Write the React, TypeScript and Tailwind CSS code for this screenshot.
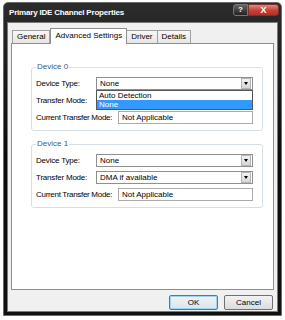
import React from "react";

const font = { fontFamily: "'Liberation Sans', Arial, sans-serif" };

function Select({ value, open }: { value: string; open?: boolean }) {
  return (
    <div className="relative w-[157px] h-[13px] border border-[#8f8f8f] bg-white flex items-center">
      <span className="pl-[3px] flex-1 text-[8px] text-black leading-none whitespace-nowrap">{value}</span>
      <div className="w-[10px] h-[11px] mr-px bg-gradient-to-b from-[#f2f2f2] to-[#d6d6d6] border border-[#b5b5b5] flex items-center justify-center">
        <div className="w-0 h-0 border-l-[2.5px] border-r-[2.5px] border-t-[3px] border-l-transparent border-r-transparent border-t-black" />
      </div>
      {open && (
        <div className="absolute left-[-1px] top-[12px] w-[157px] bg-white border border-[#555] z-10 flex flex-col text-[8px] leading-none">
          <div className="h-[9px] pl-[2px] flex items-center text-black">Auto Detection</div>
          <div className="h-[9px] pl-[2px] flex items-center bg-[#3399ff] text-white">None</div>
        </div>
      )}
    </div>
  );
}

function Group({ title, open, mode }: { title: string; open?: boolean; mode: string }) {
  return (
    <div className="relative ml-[19px] w-[232px] border border-[#d5dfe5] rounded-[3px] pt-[9px] pb-[6px] px-[4px] flex flex-col gap-[4px]">
      <span className="absolute left-[4px] top-[-5px] bg-white px-px text-[8px] leading-none text-[#3a5a8c]">{title}</span>
      <div className="flex items-center">
        <span className="w-[60px] text-[8px] text-black whitespace-nowrap tracking-[-0.2px]">Device Type:</span>
        <Select value="None" open={open} />
      </div>
      <div className="flex items-center">
        <span className="w-[60px] text-[8px] text-black whitespace-nowrap tracking-[-0.2px]">Transfer Mode:</span>
        <Select value={mode} />
      </div>
      <div className="flex items-center">
        <span className="w-[82px] text-[8px] text-black whitespace-nowrap tracking-[-0.3px]">Current Transfer Mode:</span>
        <div className="w-[135px] h-[13px] border border-[#ababab] bg-white flex items-center pl-[3px] text-[8px] leading-none whitespace-nowrap">
          Not Applicable
        </div>
      </div>
    </div>
  );
}

export default function App() {
  return (
    <div className="w-[285px] h-[320px] bg-white pt-[2px] px-[3px]" style={font}>
      <div className="h-[314px] w-[279px] bg-gradient-to-b from-[#2c2c2c] via-[#0a0a0a] to-[#111] rounded-t-[5px] border border-[#6a6a6a] flex flex-col px-[3px] pb-[3px]">
        <div className="h-[19px] flex items-start justify-between">
          <span className="mt-[6px] ml-[2px] text-[8px] font-bold text-white leading-none tracking-[-0.2px] whitespace-nowrap">Primary IDE Channel Properties</span>
          <div className="flex mt-[1px] mr-[-1px]">
            <div className="w-[15px] h-[12px] rounded-l-[3px] border border-[#777] bg-gradient-to-b from-[#666] to-[#222] flex items-center justify-center text-[8px] font-bold text-white leading-none">?</div>
            <div className="w-[31px] h-[12px] rounded-r-[3px] border border-[#7a3030] bg-gradient-to-b from-[#e08a80] via-[#c8443a] to-[#b33028] flex items-center justify-center text-[9px] font-bold text-white leading-none">X</div>
          </div>
        </div>
        <div className="flex-1 bg-[#f0f0f0] border border-[#7a7a7a] flex flex-col px-[3px]">
          <div className="flex items-end h-[20px] pl-px">
            <div className="h-[13px] px-[4px] border border-b-0 border-[#a0a0a0] bg-gradient-to-b from-[#f7f7f7] to-[#e6e6e6] text-[8px] leading-[12px]">General</div>
            <div className="h-[16px] px-[4px] border border-b-0 border-[#8d8d8d] bg-white text-[8px] leading-[13px] relative top-px z-10">Advanced Settings</div>
            <div className="h-[13px] px-[4px] border border-b-0 border-l-0 border-[#a0a0a0] bg-gradient-to-b from-[#f7f7f7] to-[#e6e6e6] text-[8px] leading-[12px]">Driver</div>
            <div className="h-[13px] px-[4px] border border-b-0 border-l-0 border-[#a0a0a0] bg-gradient-to-b from-[#f7f7f7] to-[#e6e6e6] text-[8px] leading-[12px]">Details</div>
          </div>
          <div className="h-[247px] bg-white border border-[#8d8d8d] flex flex-col pt-[23px] gap-[13px]">
            <Group title="Device 0" open mode="" />
            <Group title="Device 1" mode="DMA if available" />
          </div>
          <div className="flex justify-end gap-[6px] mt-[5px] pr-px">
            <div className="w-[49px] h-[15px] rounded-[2px] border border-[#3c7fb1] bg-gradient-to-b from-[#f2f2f2] to-[#d9e6ee] shadow-[inset_0_0_0_1px_#9fd3f0] flex items-center justify-center text-[8px]">OK</div>
            <div className="w-[49px] h-[15px] rounded-[2px] border border-[#707070] bg-gradient-to-b from-[#f2f2f2] to-[#dcdcdc] flex items-center justify-center text-[8px]">Cancel</div>
          </div>
        </div>
      </div>
    </div>
  );
}
